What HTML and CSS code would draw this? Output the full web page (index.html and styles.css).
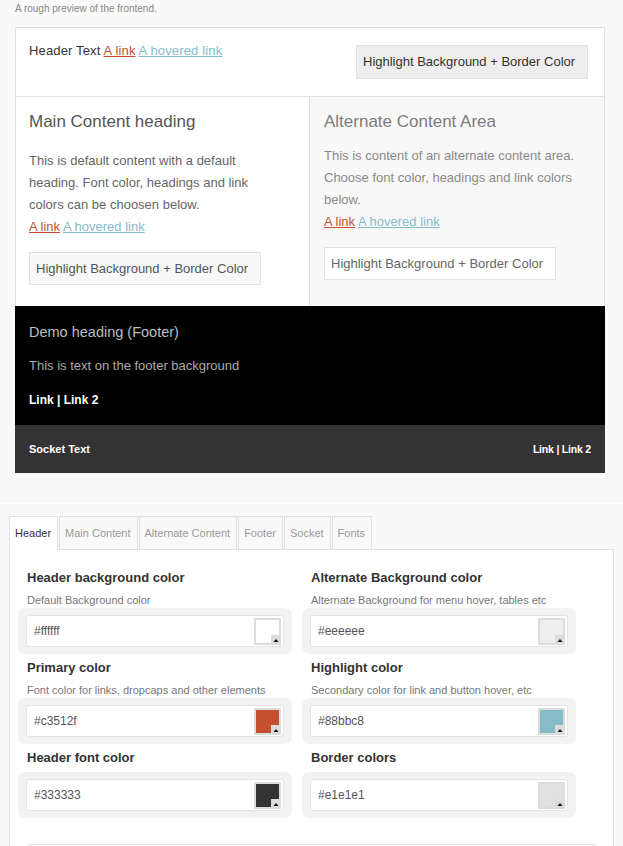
FILE: index.html
```html
<!DOCTYPE html>
<html>
<head>
<meta charset="utf-8">
<link rel="stylesheet" href="styles.css">
</head>
<body>
<p class="caption">A rough preview of the frontend.</p>
<div class="preview">
  <div class="pv-box">
    <div class="pv-header">
      <div class="pv-header-text">Header Text <a class="lnk">A link</a> <a class="lnk-h">A hovered link</a></div>
      <div class="hl hl-header">Highlight Background + Border Color</div>
    </div>
    <div class="pv-main">
      <div class="pv-col pv-col-main">
        <h2 class="pv-h">Main Content heading</h2>
        <p class="pv-p">This is default content with a default heading. Font color, headings and link colors can be choosen below.<br><a class="lnk">A link</a> <a class="lnk-h">A hovered link</a></p>
        <div class="hl hl-main">Highlight Background + Border Color</div>
      </div>
      <div class="pv-col pv-col-alt">
        <h2 class="pv-h">Alternate Content Area</h2>
        <p class="pv-p">This is content of an alternate content area. Choose font color, headings and link colors below.<br><a class="lnk">A link</a> <a class="lnk-h">A hovered link</a></p>
        <div class="hl hl-alt">Highlight Background + Border Color</div>
      </div>
    </div>
  </div>
  <div class="pv-footer">
    <div class="ft-h">Demo heading (Footer)</div>
    <div class="ft-p">This is text on the footer background</div>
    <div class="ft-links">Link | Link 2</div>
  </div>
  <div class="pv-socket">
    <span>Socket Text</span>
    <span>Link | Link 2</span>
  </div>
</div>

<div class="sep"></div>

<div class="tabs">
  <div class="tab active">Header</div>
  <div class="tab">Main Content</div>
  <div class="tab">Alternate Content</div>
  <div class="tab">Footer</div>
  <div class="tab">Socket</div>
  <div class="tab">Fonts</div>
</div>
<div class="panel">
  <div class="grid">
    <div class="item">
      <div class="lbl">Header background color</div>
      <div class="desc">Default Background color</div>
      <div class="well"><div class="inp"><span>#ffffff</span>
        <svg class="sw" width="27" height="27" viewBox="0 0 27 27"><rect width="27" height="27" rx="1" fill="#dcdcdc"/><rect x="2" y="2" width="23" height="23" fill="#ffffff"/><rect x="17" y="17" width="10" height="10" fill="#dcdcdc"/><path d="M19.5 24 L22 21 L24.5 24 Z" fill="#111"/></svg></div></div>
    </div>
    <div class="item">
      <div class="lbl">Alternate Background color</div>
      <div class="desc">Alternate Background for menu hover, tables etc</div>
      <div class="well"><div class="inp"><span>#eeeeee</span>
        <svg class="sw" width="27" height="27" viewBox="0 0 27 27"><rect width="27" height="27" rx="1" fill="#dcdcdc"/><rect x="2" y="2" width="23" height="23" fill="#eeeeee"/><rect x="17" y="17" width="10" height="10" fill="#dcdcdc"/><path d="M19.5 24 L22 21 L24.5 24 Z" fill="#111"/></svg></div></div>
    </div>
    <div class="item">
      <div class="lbl">Primary color</div>
      <div class="desc">Font color for links, dropcaps and other elements</div>
      <div class="well"><div class="inp"><span>#c3512f</span>
        <svg class="sw" width="27" height="27" viewBox="0 0 27 27"><rect width="27" height="27" rx="1" fill="#dcdcdc"/><rect x="2" y="2" width="23" height="23" fill="#c3512f"/><rect x="17" y="17" width="10" height="10" fill="#dcdcdc"/><path d="M19.5 24 L22 21 L24.5 24 Z" fill="#111"/></svg></div></div>
    </div>
    <div class="item">
      <div class="lbl">Highlight color</div>
      <div class="desc">Secondary color for link and button hover, etc</div>
      <div class="well"><div class="inp"><span>#88bbc8</span>
        <svg class="sw" width="27" height="27" viewBox="0 0 27 27"><rect width="27" height="27" rx="1" fill="#dcdcdc"/><rect x="2" y="2" width="23" height="23" fill="#88bbc8"/><rect x="17" y="17" width="10" height="10" fill="#dcdcdc"/><path d="M19.5 24 L22 21 L24.5 24 Z" fill="#111"/></svg></div></div>
    </div>
    <div class="item">
      <div class="lbl">Header font color</div>
      <div class="well well-nodesc"><div class="inp"><span>#333333</span>
        <svg class="sw" width="27" height="27" viewBox="0 0 27 27"><rect width="27" height="27" rx="1" fill="#dcdcdc"/><rect x="2" y="2" width="23" height="23" fill="#333333"/><rect x="17" y="17" width="10" height="10" fill="#dcdcdc"/><path d="M19.5 24 L22 21 L24.5 24 Z" fill="#111"/></svg></div></div>
    </div>
    <div class="item">
      <div class="lbl">Border colors</div>
      <div class="well well-nodesc"><div class="inp"><span>#e1e1e1</span>
        <svg class="sw" width="27" height="27" viewBox="0 0 27 27"><rect width="27" height="27" rx="1" fill="#dcdcdc"/><rect x="2" y="2" width="23" height="23" fill="#e1e1e1"/><rect x="17" y="17" width="10" height="10" fill="#dcdcdc"/><path d="M19.5 24 L22 21 L24.5 24 Z" fill="#111"/></svg></div></div>
    </div>
  </div>
  <div class="rule"></div>
</div>
</body>
</html>
```
FILE: styles.css
```css
html, body {
  margin: 0;
  padding: 0;
  background: #f9f9f9;
  font-family: "Liberation Sans", Arial, Helvetica, sans-serif;
  color: #333;
}

.caption {
  margin: 0;
  height: 24px;
  padding: 3px 15px 0;
  font-size: 10px;
  line-height: 12px;
  color: #888;
}

.preview {
  margin-left: 15px;
  width: 590px;
}

.pv-box {
  border: 1px solid #e1e1e1;
  border-bottom: 0;
  background: #fff;
}

.pv-header {
  display: flex;
  justify-content: space-between;
  align-items: flex-start;
  height: 54px;
  padding: 14px 16px 0 13px;
  border-bottom: 1px solid #e1e1e1;
}

.pv-header-text {
  font-size: 13px;
  line-height: 18px;
  color: #333;
  letter-spacing: 0.15px;
}

.lnk {
  color: #c3512f;
  text-decoration: underline;
}

.lnk-h {
  color: #88bbc8;
  text-decoration: underline;
}

.hl {
  box-sizing: border-box;
  width: 232px;
  height: 33px;
  line-height: 31px;
  padding-left: 6px;
  font-size: 13px;
  color: #333;
  border: 1px solid #e1e1e1;
  white-space: nowrap;
}

.hl-header {
  height: 34px;
  line-height: 32px;
  margin-top: 3px;
  background: #eeeeee;
}

.pv-main {
  display: flex;
}

.pv-col {
  box-sizing: border-box;
}

.pv-col-main {
  width: 293px;
  padding: 15px 40px 21px 13px;
  background: #fff;
}

.pv-col-alt {
  flex: 1;
  padding: 15px 14px 21px 14px;
  background: #f8f8f8;
  border-left: 1px solid #e1e1e1;
}

.pv-h {
  margin: 0;
  font-size: 17px;
  line-height: 20px;
  font-weight: normal;
}

.pv-p {
  margin: 18px 0 14px;
  font-size: 13px;
  line-height: 22px;
}

.pv-col-main .pv-h { color: #555; }
.pv-col-main .pv-p { color: #666; }

.pv-col-alt .pv-h { color: #7c7c7c; }
.pv-col-alt .pv-p { color: #8a8a8a; margin-top: 13px; }

.hl-main {
  background: #f8f8f8;
  color: #555;
}

.hl-alt {
  background: #fff;
  color: #666;
}

.pv-footer {
  background: #000;
  padding: 17px 14px 16px;
}

.ft-h {
  font-size: 14.5px;
  line-height: 18px;
  color: #bdbdbd;
}

.ft-p {
  margin-top: 16px;
  font-size: 13px;
  line-height: 18px;
  color: #aaa;
}

.ft-links {
  margin-top: 16px;
  font-size: 12px;
  line-height: 18px;
  font-weight: bold;
  color: #fff;
}

.pv-socket {
  display: flex;
  justify-content: space-between;
  align-items: center;
  height: 48px;
  padding: 0 14px;
  background: #333;
  color: #fff;
  font-size: 11px;
  font-weight: bold;
}

.pv-socket span:last-child {
  font-size: 10.5px;
  letter-spacing: -0.2px;
}

.sep {
  margin-top: 30px;
  border-top: 1px solid #fff;
}

.tabs {
  display: flex;
  align-items: flex-start;
  margin: 12px 0 -1px 9px;
  height: 34px;
}

.tab {
  box-sizing: border-box;
  height: 33px;
  margin-right: 1px;
  padding: 0 6px 0 5px;
  border: 1px solid #e1e1e1;
  border-bottom: 0;
  background: #f9f9f9;
  font-size: 11px;
  line-height: 32px;
  color: #999;
}

.tab.active {
  position: relative;
  height: 34px;
  background: #fff;
  color: #333;
}

.panel {
  box-sizing: border-box;
  margin-left: 9px;
  width: 605px;
  padding: 20px 0 0 8px;
  border: 1px solid #e1e1e1;
  border-bottom: 0;
  background: #fff;
}

.grid {
  display: grid;
  grid-template-columns: 274px 274px;
  column-gap: 10px;
  row-gap: 6px;
}

.lbl {
  margin-left: 9px;
  font-size: 13px;
  line-height: 16px;
  font-weight: bold;
  color: #333;
}

.desc {
  margin: 6px 0 0 9px;
  font-size: 11px;
  line-height: 16px;
  color: #777;
}

.well {
  padding: 7px 8px;
  background: #f2f2f2;
  border-radius: 7px;
}

.well-nodesc {
  margin-top: 6px;
}

.inp {
  box-sizing: border-box;
  display: flex;
  justify-content: space-between;
  align-items: center;
  height: 32px;
  padding: 0 2px 0 7px;
  background: #fff;
  border: 1px solid #e4e4e4;
  border-radius: 3px;
  font-size: 12px;
  color: #555;
}

.sw {
  display: block;
}

.rule {
  margin: 26px 0 0 9px;
  width: 570px;
  border-top: 1px solid #e1e1e1;
  height: 10px;
}
```
